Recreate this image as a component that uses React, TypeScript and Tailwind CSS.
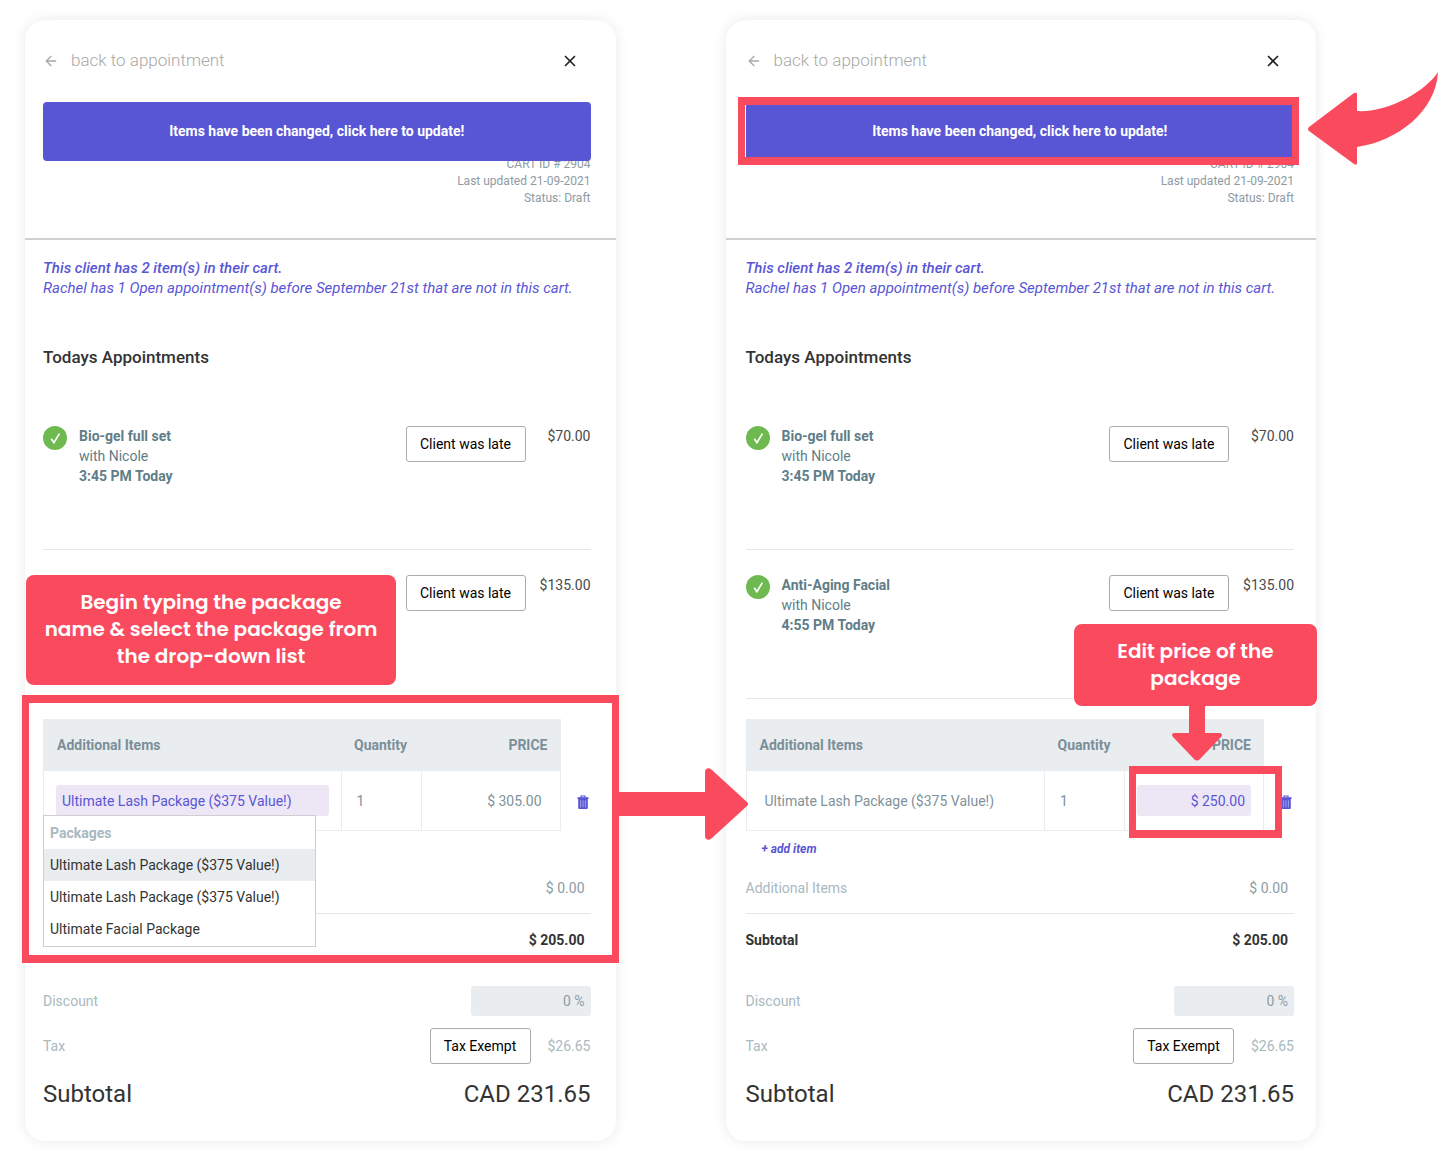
import React from 'react';
import { ArrowLeft, X } from 'lucide-react';

type CartMode = 'select' | 'price';

interface Appointment {
  name: string;
  time: string;
  price: string;
}

const appointments: Appointment[] = [
  { name: 'Bio-gel full set', time: '3:45 PM Today', price: '$70.00' },
  { name: 'Anti-Aging Facial', time: '4:55 PM Today', price: '$135.00' },
];

const packages = [
  'Ultimate Lash Package ($375 Value!)',
  'Ultimate Lash Package ($375 Value!)',
  'Ultimate Facial Package',
];

function TrashIcon() {
  return (
    <svg viewBox="0 0 12 14" className="w-3 h-3.5" fill="#5956d6">
      <path d="M4 2.5V1h4v1.5" fill="none" stroke="#5956d6" strokeWidth="1.2" />
      <path d="M0.5 2.2h11v1.8h-11z" />
      <path d="M1.2 4h9.6v9a1 1 0 0 1-1 1H2.2a1 1 0 0 1-1-1z" />
      <path d="M3.6 5.2v7.2M6 5.2v7.2M8.4 5.2v7.2" stroke="#a9a7ee" strokeWidth="0.9" />
    </svg>
  );
}

function DoneBadge() {
  return (
    <svg viewBox="0 0 24 24" className="w-6 h-6">
      <circle cx="12" cy="12" r="12" fill="#6fba50" />
      <path d="M8.3 12.8l2.6 3.9L16.4 7.6" fill="none" stroke="#ffffff" strokeWidth="1.7" />
    </svg>
  );
}

function AppointmentRow({ appointment, covered }: { appointment: Appointment; covered: boolean }) {
  return (
    <li className="flex items-start h-[149px] pt-[25px] border-b border-[#e4e7e9]">
      <DoneBadge />
      <div className={`flex-1 ml-3 leading-5 text-[#5f7d88] ${covered ? 'invisible' : ''}`}>
        <h3 className="font-bold">{appointment.name}</h3>
        <p>with Nicole</p>
        <p className="font-bold">{appointment.time}</p>
      </div>
      <button className="w-[120px] h-9 border border-[#a9abb3] rounded-[3px] bg-white text-black">
        Client was late
      </button>
      <span className="w-[65px] leading-5 text-right text-[#4a4a4a]">{appointment.price}</span>
    </li>
  );
}

function ItemsTable({ mode }: { mode: CartMode }) {
  const field = 'block w-full h-[31px] px-1.5 rounded-[3px] outline-none';
  const active = 'bg-[#ede6f5] text-[#5956d6]';
  const idle = 'bg-transparent text-[#7f929b]';

  return (
    <div className="relative flex mt-5">
      <table className="flex-1 table-fixed border-collapse border border-[#e9edf0]">
        <thead>
          <tr className="h-[51px] bg-[#e9edf0] text-[#7b8f99]">
            <th className="px-[13px] text-left font-bold">Additional Items</th>
            <th className="w-20 px-[13px] text-left font-bold">Quantity</th>
            <th className="w-[139px] px-3 text-right font-bold">PRICE</th>
          </tr>
        </thead>
        <tbody>
          <tr className="h-[60px]">
            <td className="px-3 border border-[#e9edf0]">
              <input
                aria-label="Item"
                className={`${field} ${mode === 'select' ? active : idle}`}
                defaultValue={packages[0]}
              />
            </td>
            <td className="px-[9px] border border-[#e9edf0]">
              <input aria-label="Quantity" className={`${field} ${idle}`} defaultValue="1" />
            </td>
            <td className="px-3 border border-[#e9edf0]">
              <input
                aria-label="Price"
                className={`${field} text-right ${mode === 'price' ? active : idle}`}
                defaultValue={mode === 'price' ? '$ 250.00' : '$ 305.00'}
              />
            </td>
          </tr>
        </tbody>
      </table>
      <div className="flex items-end justify-end w-[30px] pr-0.5 pb-[22px]">
        <button aria-label="Remove item">
          <TrashIcon />
        </button>
      </div>

      {mode === 'select' && (
        <div className="absolute left-0 top-24 z-10 w-[273px] py-px border border-[#cfcfcf] bg-white text-[#333333]">
          <h4 className="h-8 px-1.5 leading-8 font-bold text-[#a9b9c0]">Packages</h4>
          <ul>
            {packages.map((name, index) => (
              <li key={index} className={`h-8 px-1.5 leading-8 ${index === 0 ? 'bg-[#e9edf0]' : ''}`}>
                {name}
              </li>
            ))}
          </ul>
        </div>
      )}
    </div>
  );
}

function CartCard({ mode, children }: { mode: CartMode; children: React.ReactNode }) {
  const gutter = mode === 'select' ? 'pl-[18px] pr-[25px]' : 'pl-5 pr-[22px]';
  // The open package list sits on top of these labels
  const underList = mode === 'select' ? 'invisible' : '';

  return (
    <section className="relative rounded-[20px] bg-white pb-[29px] shadow-[0_0_14px_rgba(0,0,0,0.09)]">
      <header className={`${gutter} border-b-2 border-[#d0d0d0]`}>
        <div className="flex items-center justify-between h-[82px] pr-3">
          <a href="#" className="flex items-center gap-3 text-[17px] font-light text-[#a8a8a8]">
            <ArrowLeft className="w-4 h-4" strokeWidth={2} />
            back to appointment
          </a>
          <button aria-label="Close">
            <X className="w-[18px] h-[18px] text-[#222222]" strokeWidth={2.25} />
          </button>
        </div>
        <button className="relative block w-full h-[59px] rounded bg-[#5956d6] font-bold text-white">
          Items have been changed, click here to update!
        </button>
        <div className="-mt-[5px] pb-[31px] text-xs leading-[17px] text-right text-[#8d9ba3]">
          <p>CART ID # 2904</p>
          <p>Last updated 21-09-2021</p>
          <p>Status: Draft</p>
        </div>
      </header>

      <div className={gutter}>
        <div className="pt-[18px] text-[15px] leading-5 italic text-[#5956d6]">
          <p className="font-medium">This client has 2 item(s) in their cart.</p>
          <p>Rachel has 1 Open appointment(s) before September 21st that are not in this cart.</p>
        </div>

        <h2 className="mt-[47px] text-[17px] leading-6 font-medium text-[#333333]">Todays Appointments</h2>

        <ul className="mt-8">
          {appointments.map((appointment, index) => (
            <AppointmentRow
              key={appointment.name}
              appointment={appointment}
              covered={mode === 'select' && index === 1}
            />
          ))}
        </ul>

        <ItemsTable mode={mode} />

        <a
          href="#"
          className={`block mt-2 ml-4 text-xs leading-5 font-bold italic text-[#5956d6] ${underList}`}
        >
          + add item
        </a>

        <div className="flex justify-between h-[54px] pt-[19px] pr-1.5 leading-5">
          <span className={`text-[#a9b9c0] ${underList}`}>Additional Items</span>
          <span className="text-[#8d9ba3]">$ 0.00</span>
        </div>
        <div className="flex justify-between h-[73px] pt-4 pr-1.5 border-t border-[#e4e7e9] leading-5 font-bold text-[#333333]">
          <span className={underList}>Subtotal</span>
          <span>$ 205.00</span>
        </div>
        <div className="flex items-center justify-between text-[#a9b9c0]">
          <label htmlFor={`discount-${mode}`}>Discount</label>
          <input
            id={`discount-${mode}`}
            className="w-[120px] h-[30px] px-1.5 rounded-[3px] bg-[#e9edf0] text-right text-[#8d9ba3]"
            defaultValue="0 %"
          />
        </div>
        <div className="flex items-center mt-3 text-[#a9b9c0]">
          <span className="flex-1">Tax</span>
          <button className="w-[101px] h-9 border border-[#a9abb3] rounded-[3px] bg-white text-black">
            Tax Exempt
          </button>
          <span className="w-[60px] text-right">$26.65</span>
        </div>
        <div className="flex justify-between mt-3 text-2xl leading-9 text-[#333333]">
          <span>Subtotal</span>
          <span>CAD 231.65</span>
        </div>
      </div>

      {children}
    </section>
  );
}

export default function App() {
  const callout =
    "absolute z-20 flex justify-center pt-3.5 rounded-lg bg-[#fa4b5e] text-center text-white text-[20px] leading-[27px] font-semibold font-['Poppins','Inter',sans-serif]";

  return (
    <main className="grid grid-cols-2 gap-[110px] pt-5 pb-[25px] pl-[25px] pr-[140px] bg-white text-[14px] font-['Roboto',sans-serif]">
      <CartCard mode="select">
        <p className={`${callout} left-px top-[555px] w-[370px] h-[110px]`}>
          Begin typing the package
          <br />
          name &amp; select the package from
          <br />
          the drop-down list
        </p>
        <div className="absolute z-20 -left-[3px] -right-[3px] top-[675px] h-[268px] border-x-[7px] border-y-8 border-[#fa4b5e]" />
        <svg
          viewBox="0 0 133 72"
          className="absolute z-20 left-full top-[748px] -ml-px w-[133px] h-[72px]"
          fill="#fa4b5e"
        >
          <path d="M0 24h90V4c0-4 4-5 7-2l35 32q2 2 0 4L97 70c-3 3-7 2-7-2V48H0z" />
        </svg>
      </CartCard>

      <CartCard mode="price">
        <div className="absolute z-20 left-3 right-[17px] top-[77px] h-[68px] border-x-[7px] border-y-8 border-[#fa4b5e]" />
        <svg
          viewBox="0 0 130 94"
          className="absolute z-20 left-full top-[51px] -ml-2 w-[130px] h-[94px]"
          fill="#fa4b5e"
        >
          <path d="M1 56L46 22q3-1 3 1v17C80 42 118 20 130 1C128 40 90 70 49 76v16q0 3-3 1L1 60q-2-2 0-4z" />
        </svg>
        <p className={`${callout} -right-px top-[604px] w-[243px] h-[82px]`}>
          Edit price of the
          <br />
          package
        </p>
        <svg
          viewBox="0 0 50 56"
          className="absolute z-20 right-[94px] top-[685px] w-[50px] h-14"
          fill="#fa4b5e"
        >
          <path d="M17 0h16v28h14c3 0 4 2 2 4L28 54q-3 3-6 0L1 32c-2-2-1-4 2-4h14z" />
        </svg>
        <div className="absolute z-20 right-[34px] top-[746px] w-[153px] h-[72px] border-x-[7px] border-y-8 border-[#fa4b5e]" />
      </CartCard>
    </main>
  );
}
